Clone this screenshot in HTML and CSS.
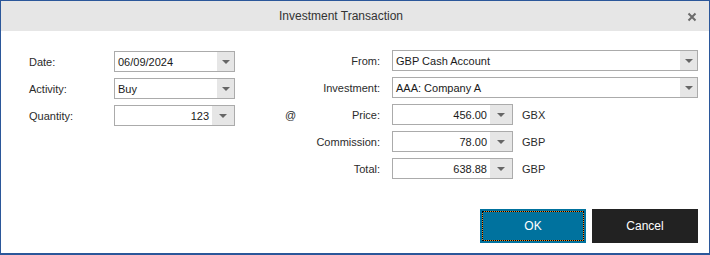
FILE: index.html
```html
<!DOCTYPE html>
<html lang="en">
<head>
    <meta charset="UTF-8">
    <title>Investment Transaction</title>
    <link rel="stylesheet" href="styles.css">
</head>
<body>
    <div class="window">
        <div class="titlebar">
            <span class="title">Investment Transaction</span>
            <svg class="close" width="10" height="10" viewBox="0 0 10 10">
                <path d="M1.5 1.5 L8.5 8.5 M8.5 1.5 L1.5 8.5" stroke="#6b6b6b" stroke-width="2"/>
            </svg>
        </div>

        <div class="form">
            <div class="left">
                <label class="label">Date:</label>
                <div class="combo"><span class="value">06/09/2024</span><span class="arrow"></span></div>

                <label class="label">Activity:</label>
                <div class="combo"><span class="value">Buy</span><span class="arrow"></span></div>

                <label class="label">Quantity:</label>
                <div class="combo num"><span class="value">123</span><span class="arrow"></span></div>
            </div>

            <div class="right">
                <span></span>
                <label class="label">From:</label>
                <div class="combo"><span class="value">GBP Cash Account</span><span class="arrow"></span></div>

                <span></span>
                <label class="label">Investment:</label>
                <div class="combo"><span class="value">AAA: Company A</span><span class="arrow"></span></div>

                <span class="at">@</span>
                <label class="label">Price:</label>
                <div class="amount">
                    <div class="combo num"><span class="value">456.00</span><span class="arrow"></span></div>
                    <span class="unit">GBX</span>
                </div>

                <span></span>
                <label class="label">Commission:</label>
                <div class="amount">
                    <div class="combo num"><span class="value">78.00</span><span class="arrow"></span></div>
                    <span class="unit">GBP</span>
                </div>

                <span></span>
                <label class="label">Total:</label>
                <div class="amount">
                    <div class="combo num"><span class="value">638.88</span><span class="arrow"></span></div>
                    <span class="unit">GBP</span>
                </div>
            </div>
        </div>

        <div class="buttons">
            <button class="btn ok">OK</button>
            <button class="btn cancel">Cancel</button>
        </div>
    </div>
</body>
</html>
```

FILE: styles.css
```css
html, body {
    margin: 0;
    padding: 0;
    background: #fff;
    font-family: "Liberation Sans", Arial, sans-serif;
}

/* Dialog frame */
.window {
    width: 710px;
    height: 255px;
    box-sizing: border-box;
    border: 1px solid #2b579a;
    border-bottom-width: 2px;
    display: flex;
    flex-direction: column;
    background: #fff;
}

.titlebar {
    height: 30px;
    background: #e6e6e6;
    display: flex;
    align-items: center;
    justify-content: center;
    position: relative;
    padding-right: 28px;
}

.title {
    font-size: 12px;
    color: #333;
}

.close {
    position: absolute;
    right: 12px;
    top: 11px;
}

/* Fields */
.form {
    display: flex;
    padding: 19px 11px 0 28px;
    font-size: 11px;
    color: #2b2b2b;
}

.left {
    display: grid;
    grid-template-columns: 85px 121px;
    grid-auto-rows: 21px;
    row-gap: 6px;
    margin-top: 1px;
}

.right {
    display: grid;
    grid-template-columns: 20px 75px 1fr;
    grid-auto-rows: 21px;
    row-gap: 6px;
    margin-left: 50px;
    flex: 1;
}

.label {
    display: flex;
    align-items: center;
}

.right .label {
    justify-content: flex-end;
}

.right > .label {
    grid-column: 2;
}

.right .combo {
    margin-left: 12px;
}

.at {
    display: flex;
    align-items: center;
    font-size: 11px;
}

.combo {
    display: flex;
    border: 1px solid #ababab;
    background: #fff;
    box-sizing: border-box;
    color: #1a1a1a;
}

.combo .value {
    flex: 1;
    display: flex;
    align-items: center;
    padding: 0 3px;
}

.combo.num .value {
    justify-content: flex-end;
}

.arrow {
    width: 17px;
    background: #e6e6e6;
    display: flex;
    align-items: center;
    justify-content: center;
}

.arrow::after {
    content: "";
    border-left: 4px solid transparent;
    border-right: 4px solid transparent;
    border-top: 4px solid #666;
    margin-top: 1px;
}

.combo.num .arrow {
    width: 22px;
}

.amount {
    display: flex;
    align-items: stretch;
}

.amount .combo {
    width: 121px;
}

.amount .unit {
    display: flex;
    align-items: center;
    margin-left: 9px;
}

/* Dialog buttons */
.buttons {
    margin-top: auto;
    display: flex;
    justify-content: flex-end;
    gap: 6px;
    padding: 0 11px 10px 0;
}

.btn {
    width: 106px;
    height: 34px;
    border: none;
    color: #fff;
    font-family: "Liberation Sans", Arial, sans-serif;
    font-size: 12px;
    position: relative;
    padding: 0;
}

.ok {
    background: #00729e;
}

/* focus rectangle: orange under black dots */
.ok::before,
.ok::after {
    content: "";
    position: absolute;
    inset: 2px;
    border: 1px solid #f08a24;
}

.ok::after {
    border: 1px dotted #000;
}

.cancel {
    background: #222;
}
```
